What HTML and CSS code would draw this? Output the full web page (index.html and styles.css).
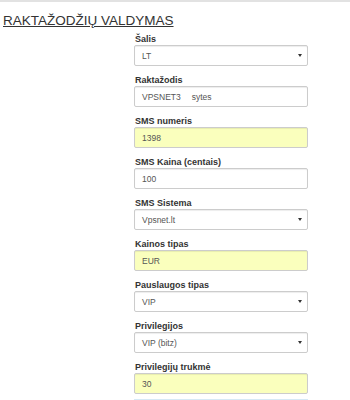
FILE: index.html
```html
<!DOCTYPE html>
<html lang="lt">
<head>
<meta charset="utf-8">
<title>Raktažodžių valdymas</title>
<link rel="stylesheet" href="styles.css">
</head>
<body>
<div class="topbar"></div>
<h1 class="title">RAKTAŽODŽIŲ VALDYMAS</h1>
<form class="form">
  <div class="group">
    <label class="label">Šalis</label>
    <div class="control select"><span>LT</span></div>
  </div>
  <div class="group">
    <label class="label">Raktažodis</label>
    <div class="control"><span>VPSNET3</span><span class="gap">sytes</span></div>
  </div>
  <div class="group">
    <label class="label">SMS numeris</label>
    <div class="control filled"><span>1398</span></div>
  </div>
  <div class="group">
    <label class="label">SMS Kaina (centais)</label>
    <div class="control"><span>100</span></div>
  </div>
  <div class="group">
    <label class="label">SMS Sistema</label>
    <div class="control select"><span>Vpsnet.lt</span></div>
  </div>
  <div class="group">
    <label class="label">Kainos tipas</label>
    <div class="control filled"><span>EUR</span></div>
  </div>
  <div class="group">
    <label class="label">Pauslaugos tipas</label>
    <div class="control select"><span>VIP</span></div>
  </div>
  <div class="group">
    <label class="label">Privilegijos</label>
    <div class="control select"><span>VIP (bitz)</span></div>
  </div>
  <div class="group">
    <label class="label">Privilegijų trukmė</label>
    <div class="control filled"><span>30</span></div>
  </div>
  <div class="next"></div>
</form>
</body>
</html>
```
FILE: styles.css
```css
html, body {
  margin: 0;
  padding: 0;
  background: #ffffff;
  font-family: "Liberation Sans", Arial, sans-serif;
  color: #333333;
}

.topbar {
  height: 2px;
  background: #e2e2e2;
}

.title {
  margin: 11px 0 0 0;
  padding-left: 3px;
  font-size: 13.5px;
  line-height: 16px;
  font-weight: normal;
  text-decoration: underline;
  color: #333333;
}

.form {
  margin: 5px 0 0 134px;
  width: 174px;
}

.group {
  margin-bottom: 9px;
}

.label {
  display: block;
  font-size: 9px;
  line-height: 11px;
  font-weight: bold;
  color: #333333;
  padding-left: 1px;
}

.control {
  position: relative;
  box-sizing: border-box;
  height: 21px;
  border: 1px solid #cccccc;
  border-radius: 2px;
  box-shadow: inset 0 1px 1px rgba(0, 0, 0, 0.075);
  background: #ffffff;
  padding: 0 7px;
  display: flex;
  align-items: center;
  font-size: 8.5px;
  color: #555555;
}

.control.filled {
  background: #faffbd;
}

.gap {
  margin-left: 11px;
}

.select::after {
  content: "";
  position: absolute;
  right: 5px;
  top: 8px;
  border-left: 2.5px solid transparent;
  border-right: 2.5px solid transparent;
  border-top: 3px solid #333333;
}

.next {
  height: 4px;
  margin-top: -4px;
  border-top: 1px solid #d6e9f5;
  background: #eef6fb;
}
```
